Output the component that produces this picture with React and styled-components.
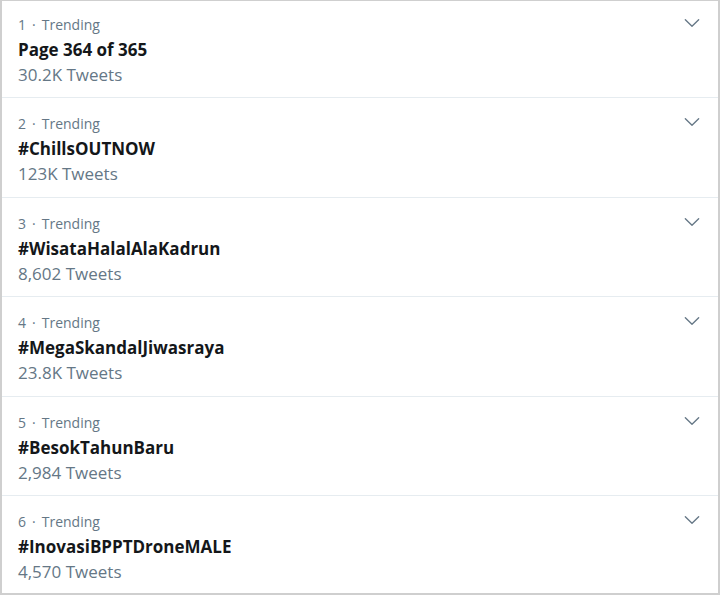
import React from "react";
import styled, { createGlobalStyle } from "styled-components";

const GlobalStyle = createGlobalStyle`
  body {
    margin: 0;
    background: #ffffff;
    font-family: "Open Sans", "Noto Sans", sans-serif;
  }
`;

const TrendList = styled.div`
  width: 720px;
  height: 595px;
  box-sizing: border-box;
  border: 1px solid #cfcfcf;
  border-width: 1px 2px 2px 2px;
  background: #ffffff;
  overflow: hidden;
`;

const TrendRow = styled.div`
  display: flex;
  justify-content: space-between;
  height: 99.5px;
  box-sizing: border-box;
  padding: 13px 16px 0 16px;
  border-bottom: 1px solid #e6ecf0;

  &:first-child {
    height: 97px;
    padding-top: 11px;
  }

  &:last-child {
    border-bottom: none;
  }
`;

const TrendText = styled.div`
  display: flex;
  flex-direction: column;
`;

const Meta = styled.div`
  font-size: 14px;
  line-height: 25px;
  color: #657786;
`;

const Dot = styled.span`
  margin: 0 6px;
`;

const Title = styled.div`
  font-size: 17px;
  line-height: 25px;
  font-weight: 700;
  color: #14171a;
`;

const Count = styled.div`
  font-size: 17px;
  line-height: 25px;
  color: #657786;
`;

const Chevron = styled.svg`
  width: 20px;
  height: 20px;
  margin-top: 1px;
  color: #657786;
`;

const trends = [
  { rank: 1, name: "Page 364 of 365", count: "30.2K Tweets" },
  { rank: 2, name: "#ChillsOUTNOW", count: "123K Tweets" },
  { rank: 3, name: "#WisataHalalAlaKadrun", count: "8,602 Tweets" },
  { rank: 4, name: "#MegaSkandalJiwasraya", count: "23.8K Tweets" },
  { rank: 5, name: "#BesokTahunBaru", count: "2,984 Tweets" },
  { rank: 6, name: "#InovasiBPPTDroneMALE", count: "4,570 Tweets" },
];

const App = () => {
  return (
    <>
      <GlobalStyle />
      <TrendList>
        {trends.map((t) => (
          <TrendRow key={t.rank}>
            <TrendText>
              <Meta>
                {t.rank}
                <Dot>·</Dot>
                Trending
              </Meta>
              <Title>{t.name}</Title>
              <Count>{t.count}</Count>
            </TrendText>
            <Chevron viewBox="0 0 24 24">
              <path
                d="M4 8l8 8 8-8"
                fill="none"
                stroke="currentColor"
                strokeWidth="1.6"
                strokeLinecap="round"
                strokeLinejoin="round"
              />
            </Chevron>
          </TrendRow>
        ))}
      </TrendList>
    </>
  );
};

export default App;
